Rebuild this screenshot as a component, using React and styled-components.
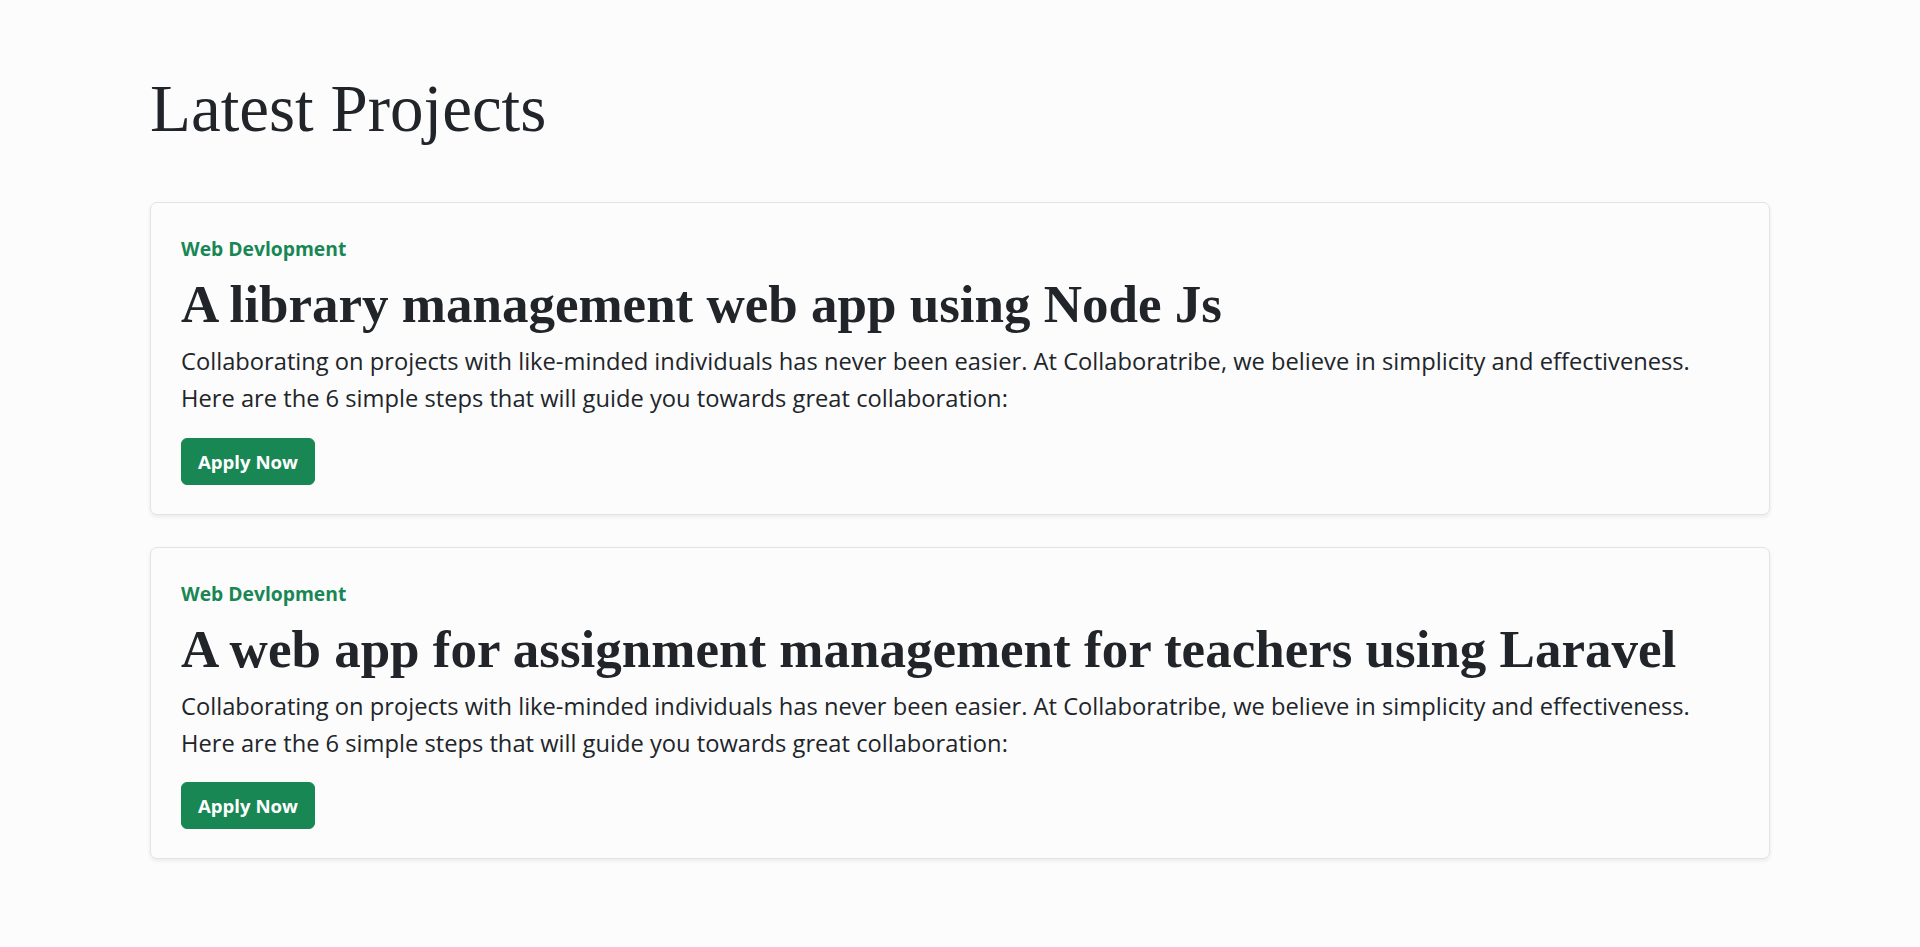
import React from "react";
import styled, { createGlobalStyle } from "styled-components";

const projects = [
  {
    category: "Web Devlopment",
    title: "A library management web app using Node Js",
  },
  {
    category: "Web Devlopment",
    title: "A web app for assignment management for teachers using Laravel",
  },
];

const GlobalStyle = createGlobalStyle`
  html, body {
    margin: 0;
    padding: 0;
    background-color: #fcfcfd;
  }

  body {
    font-family: "Open Sans", "Noto Sans", sans-serif;
    color: #212529;
  }
`;

const App = () => {
  return (
    <>
      <GlobalStyle />
      <Page>
        <Heading>Latest Projects</Heading>
        <CardList>
          {projects.map((project, index) => (
            <ProjectCard key={index}>
              <Category>{project.category}</Category>
              <Title>{project.title}</Title>
              <Description>
                Collaborating on projects with like-minded individuals has never been easier. At
                Collaboratribe, we believe in simplicity and effectiveness.
                <br />
                Here are the 6 simple steps that will guide you towards great collaboration:
              </Description>
              <ApplyButton type="button">Apply Now</ApplyButton>
            </ProjectCard>
          ))}
        </CardList>
      </Page>
    </>
  );
};

const Page = styled.main`
  padding: 68px 150px 88px;
  min-height: 100vh;
  box-sizing: border-box;
`;

const Heading = styled.h1`
  margin: 0 0 54px;
  font-family: "Liberation Serif", "DejaVu Serif", serif;
  font-size: 67px;
  font-weight: 400;
  line-height: 1.2;
  color: #212529;
`;

const CardList = styled.div`
  display: flex;
  flex-direction: column;
  gap: 32px;
`;

const ProjectCard = styled.article`
  display: flex;
  flex-direction: column;
  align-items: flex-start;
  padding: 32px 30px 29px;
  background-color: #fcfcfd;
  border: 1px solid #e2e3e8;
  border-radius: 7px;
  box-shadow: 0 2px 4px rgba(0, 0, 0, 0.075);
`;

const Category = styled.span`
  font-size: 19.3px;
  font-weight: 700;
  line-height: 27px;
  color: #198754;
`;

const Title = styled.h2`
  margin: 11px 0 0;
  font-family: "Liberation Serif", "DejaVu Serif", serif;
  font-size: 53px;
  font-weight: 700;
  line-height: 62px;
  color: #212529;
`;

const Description = styled.p`
  margin: 8px 0 0;
  font-size: 23.7px;
  line-height: 36.7px;
  color: #212529;
`;

const ApplyButton = styled.button`
  margin-top: 21px;
  padding: 8px 16px;
  font-family: "Open Sans", "Noto Sans", sans-serif;
  font-size: 18.6px;
  font-weight: 700;
  line-height: 29px;
  color: #ffffff;
  background-color: #198754;
  border: 1px solid #198754;
  border-radius: 6px;
  cursor: pointer;
`;

export default App;
